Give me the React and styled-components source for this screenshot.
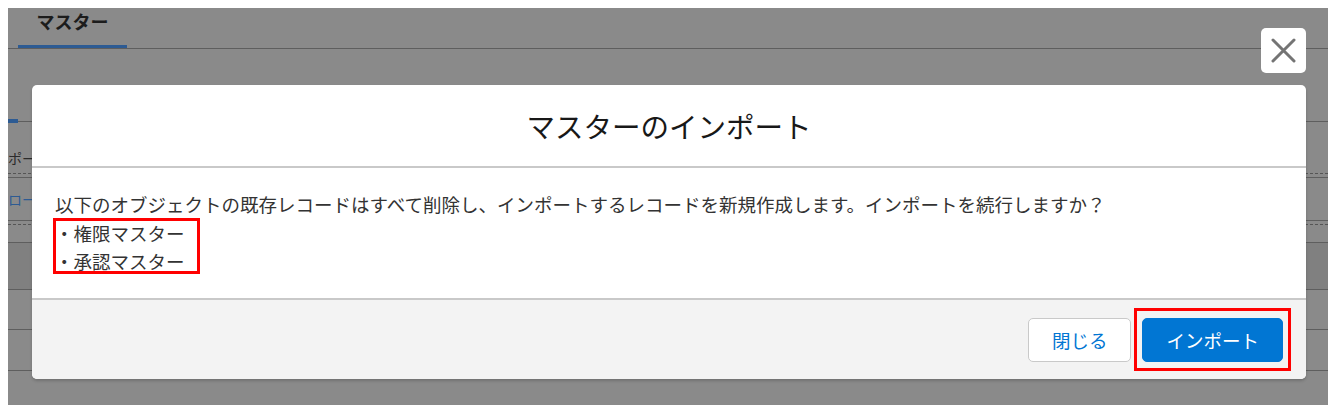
import React from "react";
import styled, { createGlobalStyle } from "styled-components";

const GlobalStyle = createGlobalStyle`
  body {
    margin: 8px;
    font-family: "Noto Sans CJK JP", "Noto Sans", sans-serif;
    background: #ffffff;
  }
`;

// 背景のページ（モーダルで暗くなっている部分）
const Page = styled.div`
  position: relative;
  width: 1320px;
  height: 397px;
  background: #8a8a8a;
  overflow: hidden;
`;

const TabBar = styled.div`
  display: flex;
  height: 40px;
  padding-left: 10px;
  border-bottom: 1px solid #5e5e5e;
`;

const Tab = styled.div`
  width: 109px;
  display: flex;
  justify-content: center;
  padding-top: 1px;
  box-sizing: border-box;
  box-shadow: inset 0 -3px 0 #2d5b93;
  font-size: 18px;
  font-weight: 700;
  line-height: 24px;
  color: #1c1c1c;
`;

const Row = styled.div`
  display: flex;
  align-items: ${(p) => p.$align || "center"};
  height: ${(p) => p.$h}px;
  background: ${(p) => p.$bg || "transparent"};
  border-bottom: 1px ${(p) => p.$dashed ? "dashed #555" : "solid #5e5e5e"};
  font-size: 14px;
  color: ${(p) => p.$color || "#2b2b2b"};
  white-space: nowrap;
`;

const Marker = styled.div`
  width: 10px;
  height: 4px;
  margin-bottom: -2px;
  background: #2d5b93;
`;

// モーダル
const Overlay = styled.div`
  position: absolute;
  inset: 0;
  display: flex;
  flex-direction: column;
  padding: 20px 22px 0 24px;
  gap: 12px;
`;

const CloseRow = styled.div`
  display: flex;
  justify-content: flex-end;
`;

const CloseButton = styled.button`
  width: 45px;
  height: 45px;
  padding: 0;
  border: none;
  border-radius: 5px;
  background: #ffffff;
  display: flex;
  align-items: center;
  justify-content: center;
`;

const Modal = styled.div`
  background: #ffffff;
  border-radius: 5px;
  overflow: hidden;
  box-shadow: 0 2px 3px rgba(0, 0, 0, 0.18);
`;

const Header = styled.div`
  height: 81px;
  display: flex;
  align-items: center;
  justify-content: center;
  border-bottom: 2px solid #c9c9c9;
  font-size: 28.5px;
  color: #181818;
`;

const Body = styled.div`
  padding: 22px 23px 22.5px;
  font-size: 18.5px;
  line-height: 28.5px;
  color: #333333;
`;

const Line = styled.div`
  white-space: nowrap;
`;

const Marked = styled.div`
  position: relative;
  &::after {
    content: "";
    position: absolute;
    top: -0.5px;
    left: -2px;
    width: 147px;
    height: 56px;
    box-sizing: border-box;
    border: 3px solid #ff0000;
  }
`;

const Footer = styled.div`
  height: 79px;
  display: flex;
  align-items: center;
  justify-content: flex-end;
  gap: 11px;
  padding-right: 23px;
  background: #f3f3f3;
  border-top: 2px solid #c9c9c9;
`;

const Button = styled.button`
  height: 44px;
  padding: 0 23px;
  border-radius: 5px;
  border: 1px solid ${(p) => (p.$primary ? "#0176d3" : "#c9c9c9")};
  background: ${(p) => (p.$primary ? "#0176d3" : "#ffffff")};
  color: ${(p) => (p.$primary ? "#ffffff" : "#0176d3")};
  font-family: inherit;
  font-size: 18.5px;
  white-space: nowrap;
`;

const Focus = styled.div`
  position: relative;
  display: flex;
  &::after {
    content: "";
    position: absolute;
    inset: -10px -8px -9px -8px;
    border: 3px solid #ff0000;
  }
`;

const App = () => {
  return (
    <>
      <GlobalStyle />
      <Page>
        <TabBar>
          <Tab>マスター</Tab>
        </TabBar>
        <Row $h={72} $align="flex-end">
          <Marker />
        </Row>
        <Row $h={51} $dashed $align="flex-end">
          <span style={{ marginBottom: 5 }}>ポー</span>
        </Row>
        <Row $h={3} />
        <Row $h={42} $color="#2d5b93">ロー</Row>
        <Row $h={3} $dashed />
        <Row $h={17} />
        <Row $h={46} $bg="#808080" />
        <Row $h={39} />
        <Row $h={40} />

        <Overlay>
          <CloseRow>
            <CloseButton aria-label="閉じる">
              <svg width="25" height="25" viewBox="0 0 25 25">
                <path
                  d="M2 2 L23 23 M23 2 L2 23"
                  stroke="#747474"
                  strokeWidth="3"
                  strokeLinecap="round"
                />
              </svg>
            </CloseButton>
          </CloseRow>
          <Modal>
            <Header>マスターのインポート</Header>
            <Body>
              <Line>
                以下のオブジェクトの既存レコードはすべて削除し、インポートするレコードを新規作成します。インポートを続行しますか？
              </Line>
              <Marked>
                <Line>・権限マスター</Line>
                <Line>・承認マスター</Line>
              </Marked>
            </Body>
            <Footer>
              <Button>閉じる</Button>
              <Focus>
                <Button $primary>インポート</Button>
              </Focus>
            </Footer>
          </Modal>
        </Overlay>
      </Page>
    </>
  );
};

export default App;
